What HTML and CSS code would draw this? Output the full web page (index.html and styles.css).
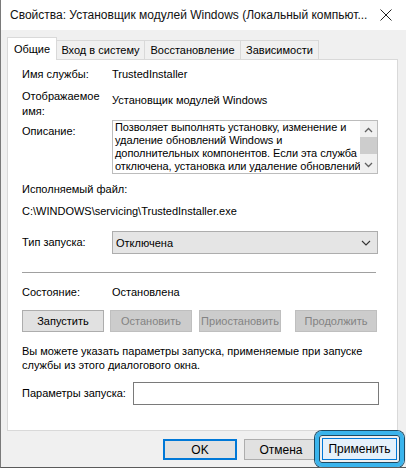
FILE: index.html
```html
<!DOCTYPE html>
<html lang="ru">
<head>
<meta charset="utf-8">
<link rel="stylesheet" href="styles.css">
</head>
<body>
<div class="window">
  <div class="titlebar">
    <span class="title">Свойства: Установщик модулей Windows (Локальный компьют...</span>
    <svg class="close" width="12" height="12" viewBox="0 0 12 12"><path d="M0.5 0.5 L11.5 11.5 M11.5 0.5 L0.5 11.5" stroke="#222" stroke-width="1" fill="none"/></svg>
  </div>
  <div class="body">
    <div class="tabs">
      <div class="tab active t1">Общие</div>
      <div class="tab t2">Вход в систему</div>
      <div class="tab t3">Восстановление</div>
      <div class="tab t4">Зависимости</div>
    </div>
    <div class="panel">
      <div class="row r-name">
        <div class="label">Имя службы:</div>
        <div class="value">TrustedInstaller</div>
      </div>
      <div class="row r-disp">
        <div class="label">Отображаемое<br>имя:</div>
        <div class="value v-disp">Установщик модулей Windows</div>
      </div>
      <div class="row r-desc">
        <div class="label l-desc">Описание:</div>
        <div class="descbox">
          <div class="desctext">Позволяет выполнять установку, изменение и<br>удаление обновлений Windows и<br>дополнительных компонентов. Если эта служба<br>отключена, установка или удаление обновлений</div>
          <div class="scrollbar">
            <svg class="arrow up" width="9" height="6" viewBox="0 0 9 6"><path d="M1 5 L4.5 1.5 L8 5" stroke="#606060" stroke-width="1.3" fill="none"/></svg>
            <div class="thumb"></div>
            <svg class="arrow down" width="9" height="6" viewBox="0 0 9 6"><path d="M1 1 L4.5 4.5 L8 1" stroke="#606060" stroke-width="1.3" fill="none"/></svg>
          </div>
        </div>
      </div>
      <div class="line r-exe">Исполняемый файл:</div>
      <div class="line r-path">C:\WINDOWS\servicing\TrustedInstaller.exe</div>
      <div class="row r-type">
        <div class="label">Тип запуска:</div>
        <div class="combo">
          <span>Отключена</span>
          <svg width="10" height="6" viewBox="0 0 10 6"><path d="M1 1 L5 5 L9 1" stroke="#333" stroke-width="1.1" fill="none"/></svg>
        </div>
      </div>
      <div class="sep"></div>
      <div class="row r-state">
        <div class="label">Состояние:</div>
        <div class="value">Остановлена</div>
      </div>
      <div class="btnrow">
        <div class="btn b1">Запустить</div>
        <div class="btn disabled b2">Остановить</div>
        <div class="btn disabled b3">Приостановить</div>
        <div class="btn disabled b4">Продолжить</div>
      </div>
      <div class="note">Вы можете указать параметры запуска, применяемые при запуске<br>службы из этого диалогового окна.</div>
      <div class="row r-params">
        <div class="label l-params">Параметры запуска:</div>
        <div class="input"></div>
      </div>
    </div>
    <div class="footer">
      <div class="btn fbtn ok">OK</div>
      <div class="btn fbtn cancel">Отмена</div>
      <div class="btn fbtn apply">Применить</div>
    </div>
  </div>
</div>
</body>
</html>
```
FILE: styles.css
```css
* { box-sizing: border-box; }
html, body { margin: 0; padding: 0; }
body {
  width: 406px;
  height: 468px;
  overflow: hidden;
  font-family: "Liberation Sans", Arial, sans-serif;
  font-size: 11px;
  color: #000;
  background: #f0f0f0;
}
.window {
  width: 406px;
  height: 468px;
  border-left: 1px solid #7a7a7a;
  border-bottom: 1px solid #5a5a5a;
  display: flex;
  flex-direction: column;
  overflow: hidden;
}
.titlebar {
  height: 30px;
  background: #fff;
  display: flex;
  align-items: center;
  justify-content: space-between;
  padding: 0 14px 0 9px;
  flex: none;
}
.title { font-size: 12px; white-space: nowrap; color: #111; }
.close { display: block; }
.body {
  flex: 1;
  background: #f0f0f0;
  padding: 7px 0 0 6px;
  display: flex;
  flex-direction: column;
}
.tabs {
  display: flex;
  align-items: flex-end;
  height: 23px;
  position: relative;
  z-index: 1;
  margin-bottom: -1px;
}
.tab {
  height: 20px;
  line-height: 18px;
  text-align: center;
  border: 1px solid #d9d9d9;
  border-left: none;
  background: #f0f0f0;
  white-space: nowrap;
  flex: none;
}
.tab.active {
  height: 23px;
  line-height: 22px;
  background: #fff;
  border-left: 1px solid #d9d9d9;
  border-bottom: none;
}
.t1 { width: 50px; }
.t2 { width: 88px; }
.t3 { width: 96px; }
.t4 { width: 78px; }
.panel {
  background: #fff;
  border: 1px solid #d9d9d9;
  height: 372px;
  width: 391px;
  padding: 0 0 0 14px;
  flex: none;
}
.row { display: flex; align-items: flex-start; }
.label { width: 90px; flex: none; line-height: 15px; }
.value { line-height: 15px; }
.line { line-height: 15px; }
.r-name { margin-top: 7px; }
.r-disp { margin-top: 7px; }
.v-disp { padding-top: 4px; }
.r-desc { margin-top: 1px; }
.l-desc { padding-top: 4px; }
.descbox {
  width: 266px;
  height: 54px;
  border: 1px solid #bcbcbc;
  display: flex;
  overflow: hidden;
}
.desctext {
  flex: 1;
  line-height: 13px;
  padding: 0 0 0 2px;
  letter-spacing: -0.08px;
  white-space: nowrap;
  overflow: hidden;
}
.scrollbar {
  width: 17px;
  flex: none;
  background: #f0f0f0;
  display: flex;
  flex-direction: column;
  align-items: center;
}
.arrow { display: block; }
.arrow.up { margin-top: 6px; }
.thumb { width: 17px; height: 17px; background: #cdcdcd; margin-top: 4px; }
.arrow.down { margin-top: 8px; }
.r-exe { margin-top: 8px; }
.r-path { margin-top: 7px; }
.r-type { margin-top: 12px; align-items: center; }
.combo {
  width: 266px;
  height: 23px;
  border: 1px solid #adadad;
  background: #e5e5e5;
  display: flex;
  align-items: center;
  justify-content: space-between;
  padding: 0 6px 0 3px;
}
.sep { width: 354px; height: 1px; background: #a0a0a0; margin-top: 18px; }
.r-state { margin-top: 12px; }
.btnrow { display: flex; margin-top: 10px; }
.btn {
  height: 22px;
  line-height: 20px;
  text-align: center;
  background: #e1e1e1;
  border: 1px solid #adadad;
  white-space: nowrap;
  flex: none;
}
.btnrow .btn { width: 82px; }
.btn.disabled { background: #cccccc; border-color: #bfbfbf; color: #838383; }
.b2 { margin-left: 6px; }
.b3 { margin-left: 7px; }
.b4 { margin-left: 14px; }
.note { line-height: 14px; margin-top: 12px; }
.r-params { margin-top: 10px; align-items: center; }
.l-params { width: 111px; }
.input { width: 246px; height: 23px; border: 1px solid #7a7a7a; background: #fff; }
.footer {
  display: flex;
  align-items: flex-start;
  padding-left: 156px;
  margin-top: 7px;
}
.fbtn { width: 74px; height: 22px; font-size: 12px; }
.ok { border: 2px solid #0078d7; line-height: 18px; margin-top: 1px; height: 21px; }
.cancel { margin-left: 7px; margin-top: 1px; height: 21px; }
.apply {
  width: 75px;
  margin-left: 4px;
  background: #e5f1fb;
  border-color: #0078d7;
  position: relative;
}
.apply::after {
  content: "";
  position: absolute;
  left: -8px;
  top: -8px;
  right: -8px;
  bottom: -8px;
  border: 4px solid #3ab4ec;
  border-radius: 7px;
  box-shadow: 0 0 0 1px #1d4a63, inset 0 0 0 1px #1d4a63;
  pointer-events: none;
}
```
